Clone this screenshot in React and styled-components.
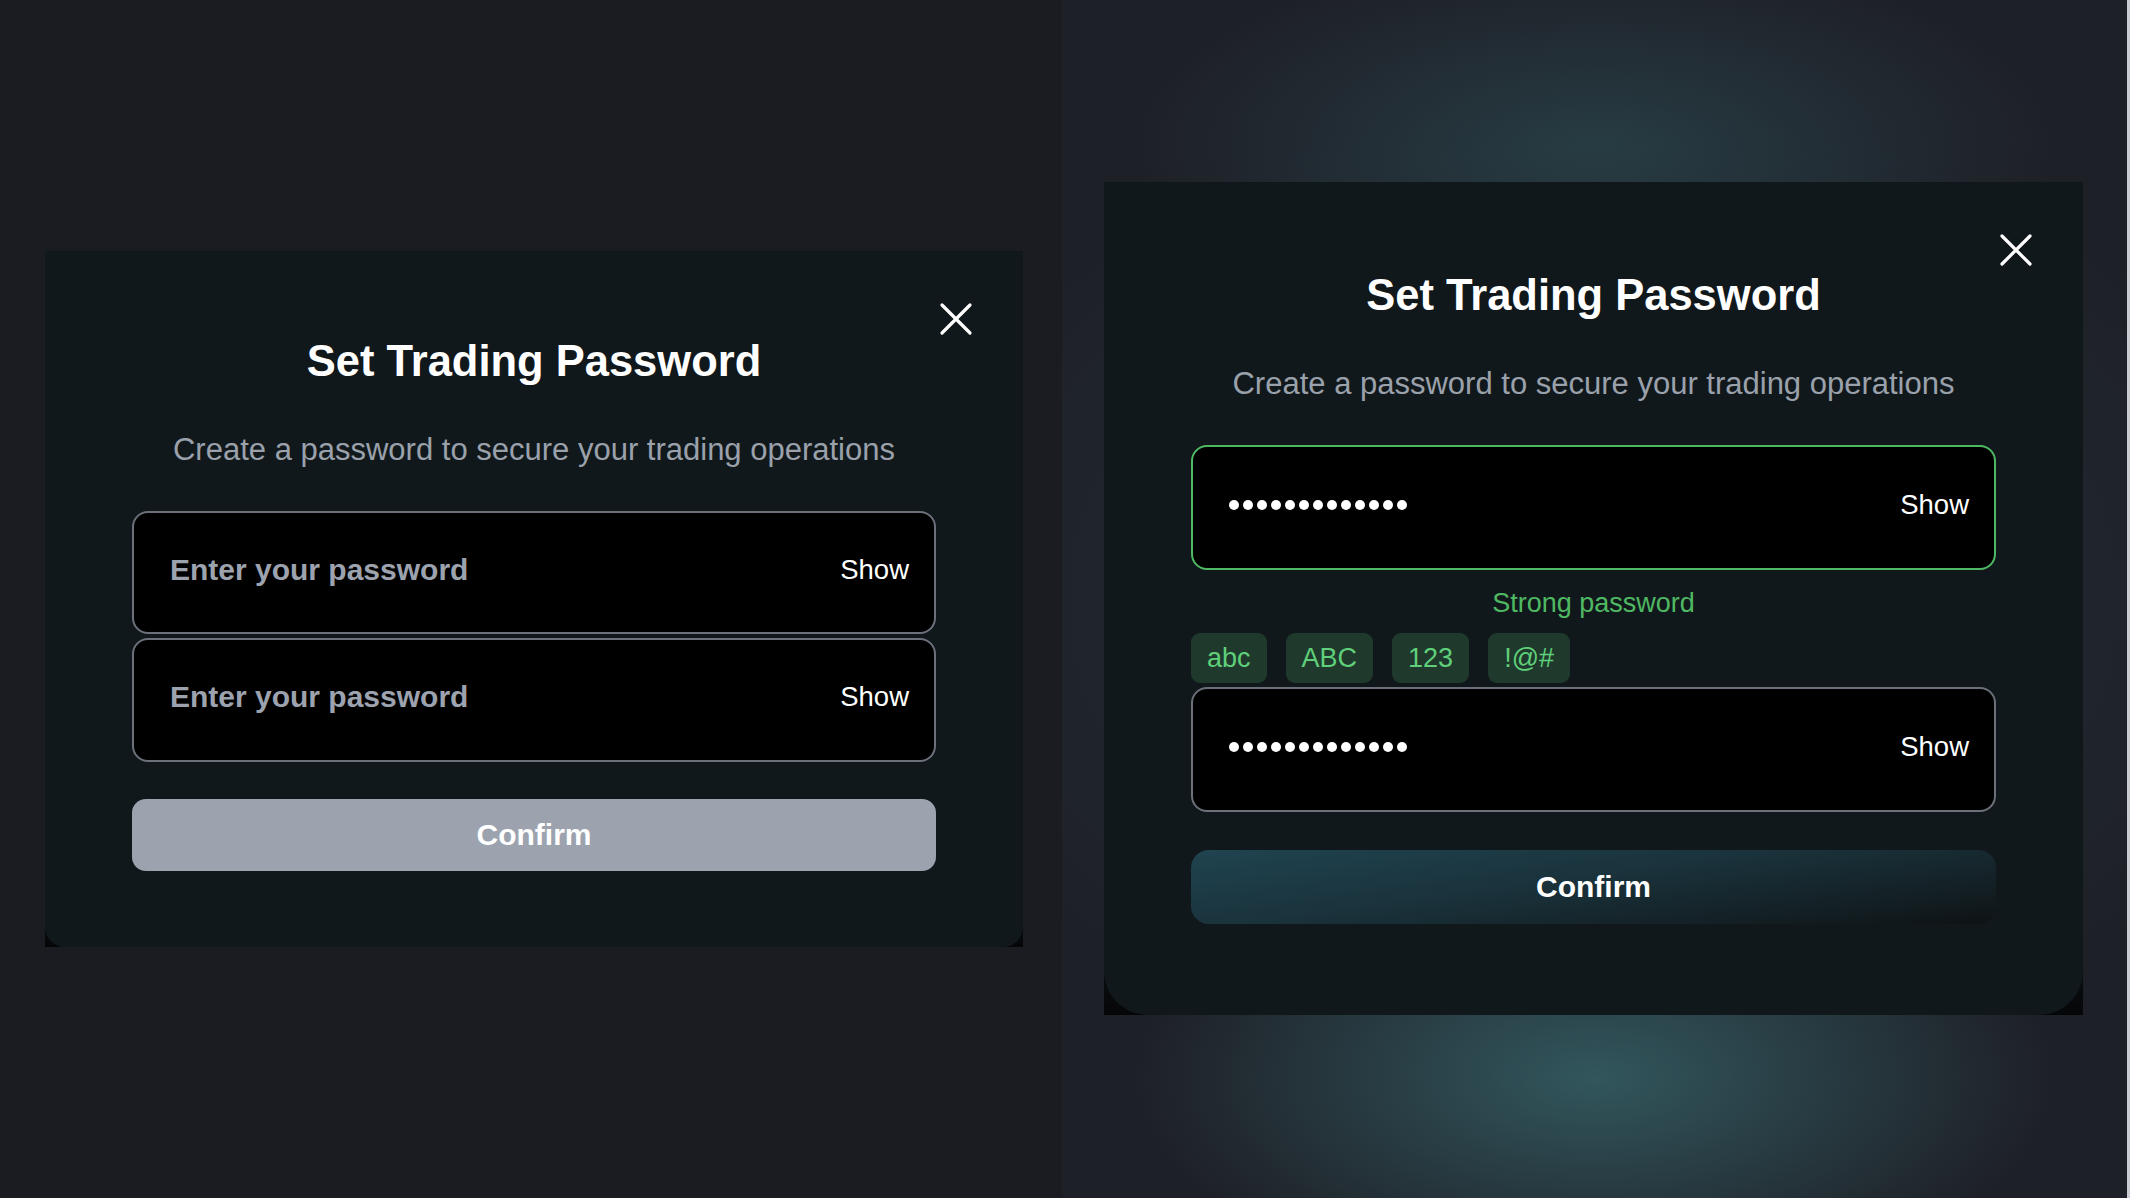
import React from 'react';
import styled, { createGlobalStyle } from 'styled-components';

const GlobalStyle = createGlobalStyle`
  html, body {
    margin: 0;
    padding: 0;
    background: #1a1c21;
  }
  body {
    font-family: "Liberation Sans", Arial, sans-serif;
  }
`;

const Page = styled.div`
  display: grid;
  grid-template-columns: 1062px 1068px;
  width: 2130px;
  height: 1198px;
  overflow: hidden;
`;

const Panel = styled.section`
  display: flex;
  align-items: flex-start;
  padding: ${(p) => p.$pad};
  box-sizing: border-box;
  background: ${(p) => p.$bg};
  ${(p) => p.$edge && 'border-right: 3px solid #c9ccd1;'}
`;

const Frame = styled.div`
  position: relative;
  width: ${(p) => p.$w}px;
  height: ${(p) => p.$h}px;
  background: linear-gradient(to bottom, #11181c 0%, #11181c 88%, #050607 100%);
  flex-shrink: 0;
`;

const Card = styled.div`
  height: 100%;
  box-sizing: border-box;
  display: flex;
  flex-direction: column;
  align-items: stretch;
  padding: ${(p) => p.$top}px 87px 0;
  background: #11181c;
  border-radius: ${(p) => (p.$round ? '0 0 44px 44px' : '0 0 20px 20px')};
`;

const CloseButton = styled.button`
  position: absolute;
  top: 51px;
  right: 50px;
  width: 34px;
  height: 34px;
  padding: 0;
  border: none;
  background: transparent;
  cursor: pointer;
  display: flex;
`;

const Title = styled.h2`
  margin: 0;
  text-align: center;
  font-size: 43.5px;
  line-height: 52px;
  font-weight: 700;
  color: #ffffff;
`;

const Subtitle = styled.p`
  margin: 44px 0 42px;
  text-align: center;
  font-size: 31px;
  line-height: 38px;
  color: #9aa1ab;
`;

const Field = styled.div`
  display: flex;
  align-items: center;
  justify-content: space-between;
  height: ${(p) => p.$h}px;
  box-sizing: border-box;
  padding: 0 25px 6px 36px;
  background: #000;
  border: 2px solid ${(p) => (p.$ok ? '#4fb862' : '#6b707a')};
  border-radius: 16px;
  & + & {
    margin-top: 4px;
  }
`;

const Placeholder = styled.span`
  font-size: 30px;
  font-weight: 700;
  color: #9ca3af;
`;

const Dots = styled.span`
  display: flex;
  gap: 4px;
`;

const Dot = styled.i`
  width: 10px;
  height: 10px;
  border-radius: 50%;
  background: #fff;
`;

const ShowToggle = styled.span`
  font-size: 27.5px;
  color: #ffffff;
`;

const Strength = styled.div`
  margin: 17px 0 14px;
  text-align: center;
  font-size: 27px;
  line-height: 32px;
  color: #4fb862;
`;

const Chips = styled.div`
  display: flex;
  gap: 19px;
  margin-bottom: 4px;
`;

const Chip = styled.span`
  height: 50px;
  padding: 0 16px;
  display: flex;
  align-items: center;
  border-radius: 9px;
  background: #1f3a2c;
  color: #5fcf7a;
  font-size: 27px;
`;

const Confirm = styled.button`
  margin-top: ${(p) => p.$mt}px;
  height: ${(p) => p.$h}px;
  border: none;
  border-radius: ${(p) => (p.$active ? '18px' : '14px')};
  font-family: inherit;
  font-size: 30px;
  font-weight: 700;
  color: #fff;
  background: ${(p) =>
    p.$active
      ? 'linear-gradient(172deg, #1f4450 0%, #1a323b 45%, #121c20 85%, #0e1214 100%)'
      : '#9ca3af'};
  cursor: pointer;
`;

const CloseIcon = () => (
  <svg width="34" height="34" viewBox="0 0 34 34" fill="none">
    <path d="M3 3 L31 31 M31 3 L3 31" stroke="#fff" strokeWidth="3.2" strokeLinecap="round" />
  </svg>
);

const Masked = ({ count }) => (
  <Dots>
    {Array.from({ length: count }).map((_, i) => (
      <Dot key={i} />
    ))}
  </Dots>
);

const Header = () => (
  <>
    <Title>Set Trading Password</Title>
    <Subtitle>Create a password to secure your trading operations</Subtitle>
  </>
);

const EmptyModal = () => (
  <Frame $w={978} $h={696}>
    <Card $top={84}>
      <Header />
      <Field $h={123}>
        <Placeholder>Enter your password</Placeholder>
        <ShowToggle>Show</ShowToggle>
      </Field>
      <Field $h={124}>
        <Placeholder>Enter your password</Placeholder>
        <ShowToggle>Show</ShowToggle>
      </Field>
      <Confirm $mt={37} $h={72}>Confirm</Confirm>
    </Card>
    <CloseButton aria-label="close">
      <CloseIcon />
    </CloseButton>
  </Frame>
);

const FilledModal = () => (
  <Frame $w={979} $h={833}>
    <Card $top={87} $round>
      <Header />
      <Field $h={125} $ok>
        <Masked count={13} />
        <ShowToggle>Show</ShowToggle>
      </Field>
      <Strength>Strong password</Strength>
      <Chips>
        {['abc', 'ABC', '123', '!@#'].map((c) => (
          <Chip key={c}>{c}</Chip>
        ))}
      </Chips>
      <Field $h={125}>
        <Masked count={13} />
        <ShowToggle>Show</ShowToggle>
      </Field>
      <Confirm $mt={38} $h={74} $active>Confirm</Confirm>
    </Card>
    <CloseButton aria-label="close">
      <CloseIcon />
    </CloseButton>
  </Frame>
);

export default function App() {
  return (
    <>
      <GlobalStyle />
      <Page>
        <Panel $pad="251px 0 0 45px" $bg="#1a1c21">
          <EmptyModal />
        </Panel>
        <Panel
          $edge
          $pad="182px 0 0 42px"
          $bg="radial-gradient(ellipse 460px 190px at 50% 12%, rgba(50, 92, 100, 0.45), rgba(50, 92, 100, 0) 100%), radial-gradient(ellipse 460px 220px at 50% 90%, rgba(56, 104, 110, 0.75), rgba(56, 104, 110, 0) 100%), radial-gradient(ellipse 700px 500px at 50% 50%, rgba(40, 62, 72, 0.6), rgba(40, 62, 72, 0) 100%), #1e2027"
        >
          <FilledModal />
        </Panel>
      </Page>
    </>
  );
}
